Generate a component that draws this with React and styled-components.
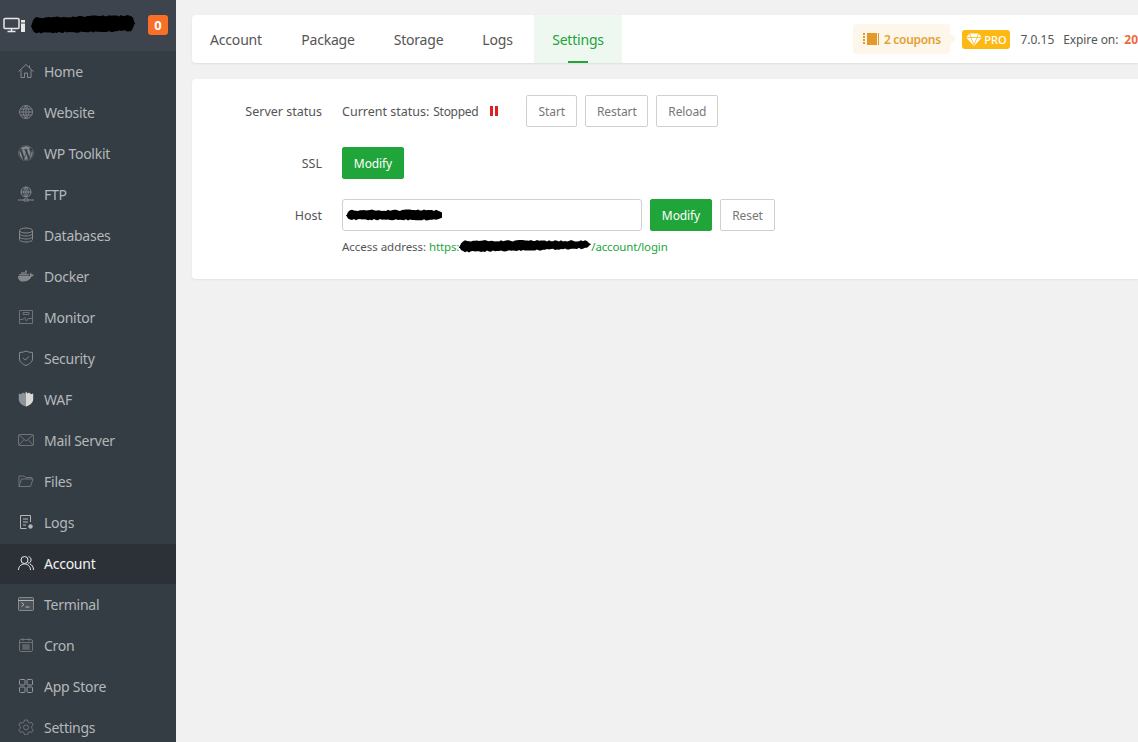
import React from 'react';
import styled, { createGlobalStyle } from 'styled-components';
import { FaWordpress, FaDocker } from 'react-icons/fa';

const GlobalStyle = createGlobalStyle`
  html, body {
    margin: 0;
    padding: 0;
    height: 100%;
    overflow: hidden;
    background: #f1f1f1;
    font-family: "Noto Sans", "Open Sans", sans-serif;
  }
  * { box-sizing: border-box; }
`;

const Page = styled.div`
  display: flex;
  width: 1138px;
  height: 742px;
  overflow: hidden;
`;

const Sidebar = styled.aside`
  width: 176px;
  flex-shrink: 0;
  height: 100%;
  background: #353d44;
  overflow: hidden;
`;

const SideHeader = styled.div`
  height: 51px;
  margin-bottom: 1px;
  background: #3d444e;
  display: flex;
  align-items: center;
  padding: 0 8px 2px 3px;
  color: #e8e8e8;
`;

const Scribble = styled.svg`
  display: block;
  flex-shrink: 0;
`;

const HeaderScribble = styled(Scribble)`
  margin: 0 auto 0 6px;
`;

const Badge = styled.span`
  width: 20px;
  height: 20px;
  border-radius: 3px;
  background: #f96f27;
  color: #fff;
  font-size: 13px;
  font-weight: 700;
  display: flex;
  align-items: center;
  justify-content: center;
`;

const MenuItem = styled.div`
  height: 40px;
  margin-bottom: 1px;
  display: flex;
  align-items: center;
  padding: 0 0 2px 18px;
  gap: 10px;
  font-size: 14px;
  letter-spacing: -0.25px;
  background: ${(p) => (p.$active ? '#2c3138' : 'transparent')};
  color: ${(p) => (p.$active ? '#f2f2f2' : '#b4b8bb')};
  svg { color: ${(p) => (p.$active ? '#ececec' : p.$tone)}; flex-shrink: 0; }
`;

const Main = styled.main`
  flex: 1;
  min-width: 0;
  padding: 15px 0 0 16px;
  display: flex;
  flex-direction: column;
  gap: 16px;
`;

const TopBar = styled.div`
  height: 48px;
  background: #fff;
  border-radius: 4px 0 0 4px;
  box-shadow: 0 1px 2px rgba(0, 0, 0, 0.08);
  display: flex;
  align-items: stretch;
  justify-content: space-between;
  overflow: hidden;
`;

const Tabs = styled.div`
  display: flex;
  gap: 4px;
`;

const Tab = styled.div`
  position: relative;
  width: ${(p) => p.$w}px;
  display: flex;
  align-items: center;
  justify-content: center;
  font-size: 14px;
  letter-spacing: -0.2px;
  color: ${(p) => (p.$active ? '#20a53a' : '#555')};
  background: ${(p) => (p.$active ? '#eef7f0' : 'transparent')};
  &::after {
    content: '';
    display: ${(p) => (p.$active ? 'block' : 'none')};
    position: absolute;
    left: 50%;
    bottom: 0;
    width: 20px;
    height: 2px;
    margin-left: -10px;
    background: #20a53a;
  }
`;

const Meta = styled.div`
  display: flex;
  align-items: center;
  font-size: 12px;
  color: #555;
  white-space: nowrap;
`;

const Coupon = styled.div`
  position: relative;
  width: 97px;
  height: 30px;
  margin-right: 12px;
  border-radius: 4px;
  background: #fdf6ea;
  color: #e6a033;
  font-weight: 600;
  letter-spacing: -0.3px;
  display: flex;
  align-items: center;
  justify-content: center;
  gap: 5px;
  &::after {
    content: '';
    position: absolute;
    right: -6px;
    top: 9px;
    border-left: 6px solid #fdf6ea;
    border-top: 6px solid transparent;
    border-bottom: 6px solid transparent;
  }
`;

const Pro = styled.div`
  width: 48px;
  height: 19px;
  margin-right: 10px;
  border-radius: 3px;
  background: #fdb913;
  color: #fff;
  font-size: 11px;
  font-weight: 500;
  display: flex;
  align-items: center;
  justify-content: center;
  gap: 2px;
`;

const Version = styled.span`
  margin-right: 9px;
`;

const Expire = styled.span`
  margin-right: 6px;
  letter-spacing: -0.1px;
`;

const Date = styled.span`
  color: #f0683a;
  font-weight: 700;
`;

const Card = styled.section`
  height: 200px;
  background: #fff;
  border-radius: 4px 0 0 4px;
  box-shadow: 0 1px 2px rgba(0, 0, 0, 0.06);
  padding: 16px 0;
  display: flex;
  flex-direction: column;
  gap: 20px;
`;

const Row = styled.div`
  display: grid;
  grid-template-columns: 130px 1fr;
  column-gap: 20px;
`;

const Label = styled.div`
  height: 32px;
  line-height: 33px;
  text-align: right;
  font-size: 12.5px;
  color: #555;
`;

const Controls = styled.div`
  display: flex;
  align-items: center;
  gap: 8px;
  height: 32px;
`;

const Status = styled.div`
  display: flex;
  align-items: center;
  font-size: 12.5px;
  color: #555;
  gap: 4px;
  margin-right: 20px;
`;

const StatusValue = styled.span`
  font-size: 12px;
  letter-spacing: -0.3px;
`;

const PauseIcon = styled.span`
  width: 8px;
  height: 10px;
  margin-left: 8px;
  border-left: 3px solid #e01f1f;
  border-right: 3px solid #e01f1f;
`;

const Button = styled.button`
  height: 32px;
  width: ${(p) => p.$w}px;
  padding: 0;
  border-radius: 2px;
  font-family: inherit;
  font-size: 12px;
  letter-spacing: -0.1px;
  border: 1px solid ${(p) => (p.$primary ? '#20a53a' : '#d0d0d0')};
  background: ${(p) => (p.$primary ? '#20a53a' : '#fff')};
  color: ${(p) => (p.$primary ? '#fff' : '#777')};
`;

const InputBox = styled.div`
  position: relative;
  width: 300px;
  height: 32px;
  border: 1px solid #d0d0d0;
  border-radius: 3px;
  background: #fff;
`;

const InputScribble = styled(Scribble)`
  position: absolute;
  left: 3px;
  top: 9px;
`;

const Hint = styled.div`
  display: flex;
  align-items: center;
  height: 18px;
  margin-top: 6px;
  font-size: 11.5px;
  letter-spacing: -0.03px;
  color: #555;
  white-space: pre;
`;

const Link = styled.span`
  color: #20a53a;
  letter-spacing: -0.15px;
`;

// the black marker scribbles over hostnames in the screenshot
const jitter = (i) => {
  const v = Math.sin(i * 12.9898) * 43758.5453;
  return v - Math.floor(v);
};

const blob = (w, shape) => {
  let top = '';
  let bottom = '';
  for (let x = 0; x <= w; x += 2) {
    const [a, b] = shape(x / w);
    const t = (a + jitter(x + 1) * 1.6).toFixed(1);
    const u = (b - jitter(x + 2) * 1.6).toFixed(1);
    top += `${x === 0 ? 'M' : 'L'}${x} ${t} `;
    bottom = `L${x} ${u} ` + bottom;
  }
  return `${top}${bottom}Z`;
};

// rounded ends for a stroke running from one height to another
const cap = (t) => Math.min(1, Math.sqrt(Math.min(t, 1 - t) * 25));

const headerShape = (t) => {
  const mid = 11.5 - t * 2.5;
  const half = 8.5 * cap(t);
  return [mid - half, mid + half];
};
const inputShape = (t) => [6 - 5.5 * cap(t), 6 + 5.5 * cap(t)];
const linkShape = (t) => {
  const mid = 7.5 - t * 2;
  const half = (6.5 - t * 2) * cap(t);
  return [mid - half, mid + half];
};

const Blob = ({ as: Comp = Scribble, w, h, shape }) => (
  <Comp width={w} height={h} viewBox={`0 0 ${w} ${h}`}>
    <path d={blob(w, shape)} fill="#000" />
  </Comp>
);

const Line = ({ children }) => (
  <svg width="16" height="16" viewBox="0 0 16 16" fill="none" stroke="currentColor" strokeWidth="1">
    {children}
  </svg>
);

const icons = {
  home: (
    <Line>
      <path d="M.5 8.500 8 1.500l7.500 7M3 7v7.500h3.500V10h3v4.500H13V7M11.500 2.500v2.500" />
    </Line>
  ),
  globe: (
    <Line>
      <circle cx="8" cy="8" r="6.500" />
      <path d="M1.500 8h13M2.500 5h11M2.500 11h11M8 1.500v13M8 1.500c-4 4-4 9 0 13M8 1.500c4 4 4 9 0 13" />
    </Line>
  ),
  wp: <FaWordpress size={16} />,
  ftp: (
    <Line>
      <circle cx="8" cy="6" r="5" />
      <path d="M3 6h10M8 1v10M8 1c-3 3-3 7 0 10M8 1c3 3 3 7 0 10M0 14h6M10 14h6M6 13h4v2H6z" />
    </Line>
  ),
  db: (
    <Line>
      <ellipse cx="8" cy="3.500" rx="6.500" ry="2.500" />
      <path d="M1.500 3.500v9c0 1.400 2.900 2.500 6.500 2.500s6.500-1.100 6.500-2.500v-9M1.500 6.500C1.500 7.900 4.400 9 8 9s6.500-1.100 6.500-2.500M1.500 9.500C1.500 10.900 4.400 12 8 12s6.500-1.100 6.500-2.500" />
    </Line>
  ),
  docker: <FaDocker size={16} />,
  monitor: (
    <Line>
      <path d="M1.500 1.500h13v13h-13z" />
      <path d="M2 10.500h3l1.500-2 2 3.500 1.500-2.500h4M5 3.500h6v2H5z" />
    </Line>
  ),
  security: (
    <Line>
      <path d="M8 1c2 1 4 1.500 6.500 1.500V9c0 3-3 5-6.500 6.500C4.500 14 1.500 12 1.500 9V2.500C4 2.500 6 2 8 1z" />
      <path d="m5 7.800 2.300 2.300L11 6.300" />
    </Line>
  ),
  waf: (
    <svg width="16" height="16" viewBox="0 0 16 16">
      <path d="M8 .5v15C3.500 14 .8 11.500.8 8V2.500l2 .8L5 1.500l1.500 1z" fill="#8f9296" />
      <path d="M8 .5v15c4.500-1.500 7.200-4 7.200-7.500V2.500l-2 .8L11 1.500l-1.500 1z" fill="#d8d8d8" />
    </svg>
  ),
  mail: (
    <Line>
      <rect x="0.500" y="2.500" width="15" height="11" rx="1" />
      <path d="m1 3 7 6 7-6M1 13l5-5.500M15 13l-5-5.500" />
    </Line>
  ),
  files: (
    <Line>
      <path d="M1 13.500V3h5l1.500 1.500H14V6" />
      <path d="M1 13.500h11.500L15 6H3.500z" />
    </Line>
  ),
  logs: (
    <Line>
      <path d="M12.500 8V1.500h-10v13h6" />
      <path d="M5 5h5M5 8h5M5 11h3" />
      <circle cx="12.500" cy="12.500" r="1.800" fill="currentColor" />
    </Line>
  ),
  account: (
    <Line>
      <circle cx="6.500" cy="5" r="3.500" />
      <path d="M.5 15c0-3.500 2.700-6 6-6s6 2.500 6 6M10.500 1.700c3.500.5 3.500 6-.5 6.600M12 9c2 .7 3.500 3 3.500 6" />
    </Line>
  ),
  terminal: (
    <Line>
      <rect x="0.500" y="1.500" width="15" height="13" rx="1" fill="#4b5157" stroke="#85898d" />
      <path d="M0.500 4.500h15M3.500 6.500l2.500 2-2.500 2M7.500 11h4" />
    </Line>
  ),
  cron: (
    <Line>
      <rect x="1.500" y="2.500" width="13" height="12" rx="1.500" />
      <path d="M1.500 5.500h13M5 1v3M11 1v3M4 8h8M4 10h8M4 12h8M6 7.500v5M8 7.500v5M10 7.500v5" />
    </Line>
  ),
  apps: (
    <Line>
      <rect x="1.500" y="1.500" width="5.500" height="5.500" rx="1" />
      <rect x="9" y="1.500" width="5.500" height="5.500" rx="1" />
      <rect x="1.500" y="9" width="5.500" height="5.500" rx="1" />
      <rect x="9" y="9" width="5.500" height="5.500" rx="1" />
    </Line>
  ),
  settings: (
    <Line>
      <path d="M6.500 1h3l.5 2 1.700 1 2-.6 1.500 2.600-1.500 1.400v2l1.500 1.400-1.500 2.600-2-.6-1.700 1-.5 2h-3l-.5-2-1.700-1-2 .6L.8 10.800l1.500-1.400v-2L.8 6l1.500-2.600 2 .6L6 3z" />
      <circle cx="8" cy="8.400" r="2.500" />
    </Line>
  ),
};

const menu = [
  ['home', 'Home', '#85898d'],
  ['globe', 'Website', '#7d8185'],
  ['wp', 'WP Toolkit', '#85898d'],
  ['ftp', 'FTP', '#85898d'],
  ['db', 'Databases', '#85898d'],
  ['docker', 'Docker', '#85898d'],
  ['monitor', 'Monitor', '#6f7377'],
  ['security', 'Security', '#85898d'],
  ['waf', 'WAF', '#85898d'],
  ['mail', 'Mail Server', '#6f7377'],
  ['files', 'Files', '#6f7377'],
  ['logs', 'Logs', '#b4b8bb'],
  ['account', 'Account', '#ececec'],
  ['terminal', 'Terminal', '#b4b8bb'],
  ['cron', 'Cron', '#6f7377'],
  ['apps', 'App Store', '#93979b'],
  ['settings', 'Settings', '#6f7377'],
];

const tabs = [
  ['Account', 88],
  ['Package', 88],
  ['Storage', 85],
  ['Logs', 65],
  ['Settings', 88],
];

const App = () => (
  <Page>
    <GlobalStyle />
    <Sidebar>
      <SideHeader>
        <svg width="22" height="16" viewBox="0 0 22 16" fill="none" stroke="currentColor">
          <rect x="1" y="1.500" width="15" height="10" rx="1" strokeWidth="1.500" />
          <path d="M4.500 14.500h8M8.500 12v2" strokeWidth="1.500" />
          <rect x="18" y="3" width="4" height="12" fill="currentColor" stroke="none" />
          <path d="M18 6h4" stroke="#3d444e" />
        </svg>
        <Blob as={HeaderScribble} w={104} h={21} shape={headerShape} />
        <Badge>0</Badge>
      </SideHeader>
      {menu.map(([icon, label, tone]) => (
        <MenuItem key={label} $active={label === 'Account'} $tone={tone}>
          {icons[icon]}
          {label}
        </MenuItem>
      ))}
    </Sidebar>
    <Main>
      <TopBar>
        <Tabs>
          {tabs.map(([t, w]) => (
            <Tab key={t} $w={w} $active={t === 'Settings'}>
              {t}
            </Tab>
          ))}
        </Tabs>
        <Meta>
          <Coupon>
            <svg width="16" height="12" viewBox="0 0 16 12">
              <path d="M4 0h10v12H4z" fill="#e39a2a" />
              <path d="M1 0v12" stroke="#e39a2a" strokeWidth="2" strokeDasharray="2 1" />
              <path d="M15.500 0v12" stroke="#e39a2a" />
            </svg>
            2 coupons
          </Coupon>
          <Pro>
            <svg width="16" height="13" viewBox="0 0 16 13">
              <path d="M3.500.5h9L16 4.500l-8 8.500-8-8.500z" fill="#fff" />
              <path d="M0 4.500h16M5 4.500 8 12l3-7.500M3.500.5 5 4.500M12.500.5 11 4.500" stroke="#fdb913" strokeWidth=".8" fill="none" />
            </svg>
            PRO
          </Pro>
          <Version>7.0.15</Version>
          <Expire>Expire on:</Expire>
          <Date>20</Date>
        </Meta>
      </TopBar>
      <Card>
        <Row>
          <Label>Server status</Label>
          <Controls>
            <Status>
              Current status:
              <StatusValue>Stopped</StatusValue>
              <PauseIcon />
            </Status>
            <Button $w={51}>Start</Button>
            <Button $w={63}>Restart</Button>
            <Button $w={62}>Reload</Button>
          </Controls>
        </Row>
        <Row>
          <Label>SSL</Label>
          <Controls>
            <Button $primary $w={62}>
              Modify
            </Button>
          </Controls>
        </Row>
        <Row>
          <Label>Host</Label>
          <div>
            <Controls>
              <InputBox>
                <Blob as={InputScribble} w={97} h={12} shape={inputShape} />
              </InputBox>
              <Button $primary $w={62}>
                Modify
              </Button>
              <Button $w={55}>Reset</Button>
            </Controls>
            <Hint>
              Access address: <Link>https:</Link>
              <Blob w={132} h={14} shape={linkShape} />
              <Link>/account/login</Link>
            </Hint>
          </div>
        </Row>
      </Card>
    </Main>
  </Page>
);

export default App;
